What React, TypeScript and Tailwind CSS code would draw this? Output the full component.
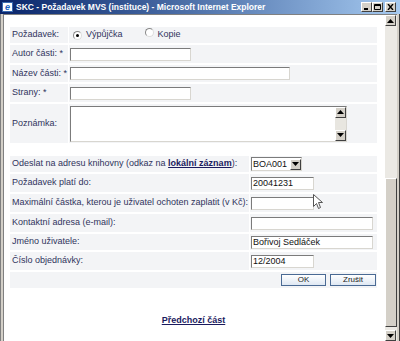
import React from "react";

const labelCls = "bg-[#f3f4f6] flex items-center pl-[2px] text-[#30335c]";
const valueCls = "bg-[#f3f4f6] flex items-center";

function Input({ w, value }: { w: string; value?: string }) {
  return (
    <div
      className={`${w} h-[13px] bg-white border-[1.5px] border-t-[#7b7b7b] border-l-[#7b7b7b] border-b-[#d8d6d0] border-r-[#d8d6d0] text-[9px] leading-[10px] text-[#111] pl-[1px] overflow-hidden whitespace-nowrap`}
    >
      {value}
    </div>
  );
}

function Radio({ checked }: { checked?: boolean }) {
  return (
    <span className="inline-flex w-[9px] h-[9px] rounded-full border border-t-[#888] border-l-[#888] border-b-[#ddd] border-r-[#ddd] bg-white items-center justify-center">
      {checked && <span className="w-[3px] h-[3px] rounded-full bg-black" />}
    </span>
  );
}

function Arrow({ up }: { up?: boolean }) {
  return (
    <div className="w-[11px] h-[11px] bg-[#d4d0c8] border border-t-white border-l-white border-b-[#404040] border-r-[#404040] flex items-center justify-center">
      <svg width="7" height="4" viewBox="0 0 7 4">
        {up ? <path d="M3.5 0 L7 4 L0 4 Z" fill="#000" /> : <path d="M0 0 L7 0 L3.5 4 Z" fill="#000" />}
      </svg>
    </div>
  );
}

function WinBtn({ kind }: { kind: "min" | "max" | "close" }) {
  return (
    <div className="w-[11px] h-[10px] bg-[#d4d0c8] border-[1px] border-t-white border-l-white border-b-[#404040] border-r-[#404040] flex items-center justify-center">
      <svg width="7" height="6" viewBox="0 0 7 6">
        {kind === "min" && <rect x="1" y="4" width="4" height="2" fill="#000" />}
        {kind === "max" && (
          <path d="M0.5 0.5 H6.5 V5.5 H0.5 Z M0.5 1.5 H6.5" stroke="#000" strokeWidth="1" fill="none" />
        )}
        {kind === "close" && <path d="M1 0 L6 6 M6 0 L1 6" stroke="#000" strokeWidth="1.4" />}
      </svg>
    </div>
  );
}

function TextInputRow({ label, w, h = "h-[18px]" }: { label: string; w: string; h?: string }) {
  return (
    <div className={`flex gap-[1px] ${h}`}>
      <div className={`${labelCls} w-[58px]`}>{label}</div>
      <div className={`${valueCls} flex-1 pl-[1px]`}>
        <Input w={w} />
      </div>
    </div>
  );
}

function FormRow({ label, children, h = "h-[18px]" }: { label: React.ReactNode; children?: React.ReactNode; h?: string }) {
  return (
    <div className={`flex gap-[1px] ${h}`}>
      <div className={`${labelCls} w-[239px]`}>{label}</div>
      <div className={`${valueCls} flex-1 pl-[1px]`}>{children}</div>
    </div>
  );
}

export default function App() {
  return (
    <div
      className="w-[400px] h-[341px] overflow-hidden flex flex-col bg-[#d4d0c8] text-[9px]"
      style={{ fontFamily: '"Liberation Sans", Arial, sans-serif' }}
    >
      {/* title bar */}
      <div className="h-[14px] flex items-center bg-gradient-to-r from-[#0a246a] to-[#a6caf0] pl-[2px] pr-[4px]">
        <div className="w-[11px] h-[10px] bg-white border border-[#3a6ab0] flex items-center justify-center">
          <span className="text-[#1a5fc0] font-bold text-[9px] leading-none italic">e</span>
        </div>
        <span className="ml-[3px] text-white font-bold text-[8.5px] whitespace-nowrap">
          SKC - Požadavek MVS (instituce) - Microsoft Internet Explorer
        </span>
        <div className="ml-auto flex items-center">
          <WinBtn kind="min" />
          <WinBtn kind="max" />
          <div className="w-[2px]" />
          <WinBtn kind="close" />
        </div>
      </div>

      <div className="flex-1 flex min-h-0">
        <div className="w-[3px] bg-[#d4d0c8] border-l border-[#808080]" />
        <div className="flex-1 bg-white border-l border-t border-[#808080] relative overflow-hidden">
          <div className="pl-[6px] pt-[12px] w-[373px]">
            <div className="flex flex-col gap-[2px]">
              <div className="flex gap-[1px] h-[16px]">
                <div className={`${labelCls} w-[58px]`}>Požadavek:</div>
                <div className={`${valueCls} flex-1 pl-[4px] gap-[4px] text-[#30335c]`}>
                  <Radio checked />
                  <span>Výpůjčka</span>
                  <span className="ml-[18px]">
                    <Radio />
                  </span>
                  <span>Kopie</span>
                </div>
              </div>
              <TextInputRow label="Autor části: *" w="w-[121px]" />
              <TextInputRow label="Název části: *" w="w-[220px]" h="h-[17px]" />
              <TextInputRow label="Strany: *" w="w-[121px]" />
              <div className="flex gap-[1px] h-[39px]">
                <div className={`${labelCls} w-[58px]`}>Poznámka:</div>
                <div className={`${valueCls} flex-1 pl-[1px]`}>
                  <div className="w-[277px] h-[36px] bg-white border-[1.5px] border-t-[#7b7b7b] border-l-[#7b7b7b] border-b-[#d8d6d0] border-r-[#d8d6d0] flex justify-end">
                    <div className="w-[11px] flex flex-col justify-between bg-[#e8e6e0]">
                      <Arrow up />
                      <Arrow />
                    </div>
                  </div>
                </div>
              </div>
            </div>

            <div className="flex flex-col gap-[2px] mt-[13px]">
              <FormRow
                label={
                  <span>
                    Odeslat na adresu knihovny (odkaz na{" "}
                    <span className="font-bold underline text-[#1a1a5e]">lokální záznam</span>):
                  </span>
                }
                h="h-[16px]"
              >
                <div className="w-[51px] h-[14px] bg-white border-[1.5px] border-t-[#7b7b7b] border-l-[#7b7b7b] border-b-[#d8d6d0] border-r-[#d8d6d0] flex items-center justify-between">
                  <span className="pl-[1px] text-[#111] leading-none">BOA001</span>
                  <Arrow />
                </div>
              </FormRow>
              <FormRow label="Požadavek platí do:">
                <Input w="w-[63px]" value="20041231" />
              </FormRow>
              <FormRow label="Maximální částka, kterou je uživatel ochoten zaplatit (v Kč):">
                <Input w="w-[63px]" />
              </FormRow>
              <FormRow label="Kontaktní adresa (e-mail):">
                <Input w="w-[122px]" />
              </FormRow>
              <FormRow label="Jméno uživatele:" h="h-[16px]">
                <Input w="w-[122px]" value="Bořivoj Sedláček" />
              </FormRow>
              <FormRow label="Číslo objednávky:">
                <Input w="w-[63px]" value="12/2004" />
              </FormRow>
              <div className="h-[16px] bg-[#f3f4f6] flex items-center justify-end gap-[4px] pr-[1px]">
                <button className="w-[45px] h-[12px] border border-[#4a6a94] bg-gradient-to-b from-white to-[#dfe8f3] text-[#222] text-[8px] leading-none">
                  OK
                </button>
                <button className="w-[46px] h-[12px] border border-[#4a6a94] bg-gradient-to-b from-white to-[#dfe8f3] text-[#222] text-[8px] leading-none">
                  Zrušit
                </button>
              </div>
            </div>

            <div className="mt-[26px] text-center">
              <span className="font-bold underline text-[#1a1a5e]">Předchozí část</span>
            </div>
          </div>

          {/* mouse cursor */}
          <svg className="absolute left-[309px] top-[179px]" width="10" height="16" viewBox="0 0 10 16">
            <path d="M0.5 0.5 L0.5 12.5 L3.5 9.5 L5.5 14.5 L7.5 13.5 L5.5 8.5 L9.5 8.5 Z" fill="#fff" stroke="#555" strokeWidth="1" />
          </svg>
        </div>

        {/* scrollbar */}
        <div className="w-[12px] flex flex-col bg-[#ebe9e4] border-t border-[#808080]">
          <Arrow up />
          <div className="h-[152px]" />
          <div className="flex-1 bg-[#d4d0c8] border border-t-white border-l-white border-b-[#404040] border-r-[#404040]" />
          <div className="h-[3px]" />
          <Arrow />
        </div>
        <div className="w-[3px] bg-[#d4d0c8] border-r border-[#404040]" />
      </div>
    </div>
  );
}
